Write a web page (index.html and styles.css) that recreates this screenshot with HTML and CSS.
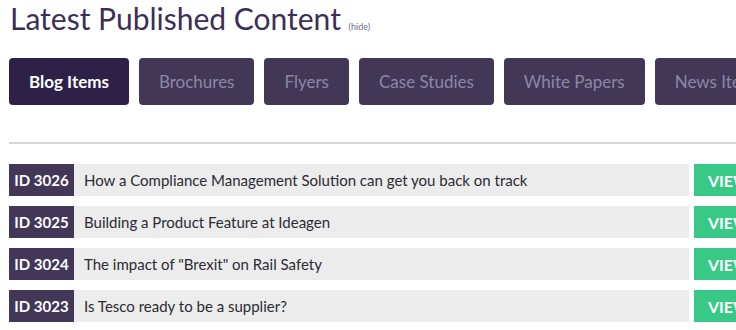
FILE: index.html
```html
<!DOCTYPE html>
<html lang="en">
<head>
  <meta charset="UTF-8">
  <meta name="viewport" content="width=device-width, initial-scale=1.0">
  <title>Latest Published Content</title>
  <link rel="stylesheet" href="styles.css">
</head>
<body>
  <div class="wrap">
    <h1 class="title">Latest Published Content <a class="hide-link" href="#">(hide)</a></h1>

    <!-- content type tabs -->
    <div class="tabs">
      <button class="tab active">Blog Items</button>
      <button class="tab">Brochures</button>
      <button class="tab">Flyers</button>
      <button class="tab">Case Studies</button>
      <button class="tab">White Papers</button>
      <button class="tab">News Items</button>
    </div>

    <hr class="divider">

    <!-- list of items -->
    <div class="items">
      <div class="item">
        <span class="item-id">ID 3026</span>
        <span class="item-title">How a Compliance Management Solution can get you back on track</span>
        <a class="item-view" href="#">VIEW</a>
      </div>
      <div class="item">
        <span class="item-id">ID 3025</span>
        <span class="item-title">Building a Product Feature at Ideagen</span>
        <a class="item-view" href="#">VIEW</a>
      </div>
      <div class="item">
        <span class="item-id">ID 3024</span>
        <span class="item-title">The impact of "Brexit" on Rail Safety</span>
        <a class="item-view" href="#">VIEW</a>
      </div>
      <div class="item">
        <span class="item-id">ID 3023</span>
        <span class="item-title">Is Tesco ready to be a supplier?</span>
        <a class="item-view" href="#">VIEW</a>
      </div>
    </div>
  </div>
</body>
</html>
```

FILE: styles.css
```css
body {
  font-family: Lato, 'Open Sans', sans-serif;
  margin: 0;
  padding: 0;
  background-color: #fff;
  overflow: hidden;
}

.wrap {
  padding-left: 9px;
  width: 800px;
}

.title {
  font-size: 30px;
  font-weight: 400;
  color: #3b2f57;
  margin: 0;
  padding-left: 1px;
  line-height: 36px;
  height: 36px;
  white-space: nowrap;
}

.hide-link {
  font-size: 9px;
  line-height: 1;
  color: #6e6a8e;
  text-decoration: none;
}

.tabs {
  display: flex;
  gap: 10px;
  margin-top: 22px;
}

.tab {
  height: 47px;
  padding: 0 20px;
  background-color: #433758;
  color: #8b88a6;
  font-family: Lato, sans-serif;
  font-size: 17px;
  border: none;
  border-radius: 4px;
  white-space: nowrap;
  cursor: pointer;
}

.tab.active {
  background-color: #2e2147;
  color: #fff;
  font-weight: 700;
}

.divider {
  border: none;
  border-top: 2px solid #d6d6d6;
  margin: 37px 0 0 0;
}

.items {
  display: flex;
  flex-direction: column;
  gap: 10px;
  margin-top: 20px;
}

.item {
  display: flex;
  height: 32px;
  align-items: stretch;
}

.item-id {
  width: 65px;
  background-color: #433758;
  color: #fff;
  font-weight: 700;
  font-size: 15px;
  display: flex;
  align-items: center;
  justify-content: center;
}

.item-title {
  width: 605px;
  background-color: #ececec;
  color: #2b2b33;
  font-size: 15px;
  padding-left: 10px;
  display: flex;
  align-items: center;
}

.item-view {
  margin-left: 5px;
  width: 80px;
  background-color: #38c987;
  color: #fff;
  font-weight: 700;
  font-size: 16px;
  text-decoration: none;
  display: flex;
  align-items: center;
  padding-left: 14px;
}
```
